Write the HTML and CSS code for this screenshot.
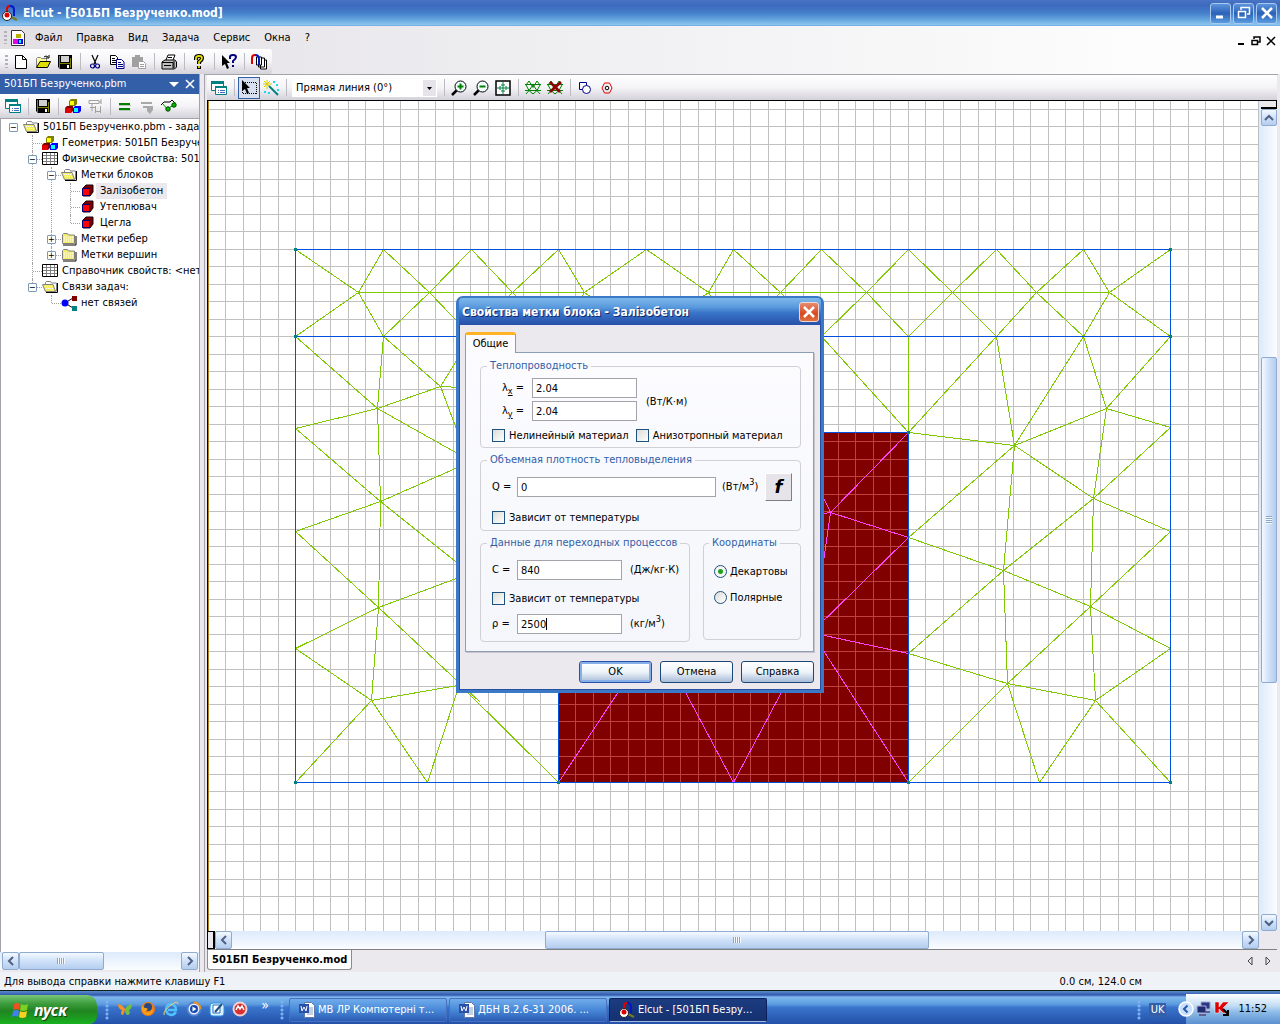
FILE: index.html
```html
<!DOCTYPE html>
<html lang="ru">
<head>
  <meta charset="utf-8">
  <title>Elcut - [501БП Безрученко.mod]</title>
  <meta name="viewport" content="width=device-width, initial-scale=1">
  <link rel="stylesheet" href="styles.css">
</head>
<body>
  <!-- shared icons -->
  <svg class="sprite" aria-hidden="true">
    <symbol id="i-elcut" viewBox="0 0 16 16">
      <path d="M5 8V4q0-3 3-3" fill="none" stroke="#e00000" stroke-width="2"/>
      <path d="M8 1q4 0 4 4v6" fill="none" stroke="#0018c8" stroke-width="2"/>
      <path d="M9 12l6 3" stroke="#7a7a20" stroke-width="2"/>
      <circle cx="5" cy="11" r="4.5" fill="#fff" stroke="#222"/>
      <circle cx="5" cy="10" r="2.5" fill="#e00000"/>
    </symbol>
    <symbol id="i-cubes" viewBox="0 0 16 16">
      <path d="M4 3l2-2h6v5l-2 2H4z" fill="#808000"/><path d="M5 3h4v4H5z" fill="#ff0"/>
      <path d="M0 10l2-2h6v5l-2 2H0z" fill="#800000"/><path d="M0 10h6v5H0z" fill="#e00000"/>
      <path d="M8 10l2-2h6v5l-2 2H8z" fill="#0000ff"/><path d="M9 10h4v4H9z" fill="#0ff"/>
    </symbol>
    <symbol id="i-props" viewBox="0 0 16 16">
      <path d="M.5 1.500h12v9H.5z" fill="#fff" stroke="#008080"/><path d="M0 1h13v3H0z" fill="#008080"/>
      <path d="M4.500 6.500h11v8h-11z" fill="#fff" stroke="#008080"/><path d="M4 6h12v2H4z" fill="#008080"/>
      <path d="M7 10.500h1M9 10.500h5M7 12.500h1M9 12.500h5" stroke="#4a68b8"/>
    </symbol>
    <symbol id="i-save" viewBox="0 0 16 16">
      <path d="M1 1h14v14H3l-2-2z" fill="#000"/><path d="M2 2h1v12H2zM13 4h1v10h-1zM3 9h10v1H3z" fill="#808000"/>
      <path d="M4 2h8v6H4z" fill="#d0d0d0"/><path d="M10 11h2v3h-2z" fill="#fff"/>
    </symbol>
    <symbol id="i-open" viewBox="0 0 16 16">
      <path d="M1.500 13V4.500l1-1h3l1 1h5V7" fill="#ffff9c" stroke="#808080"/>
      <path d="M1.500 13.500L5 7.500h10.500l-3 6z" fill="#e0dc00" stroke="#000"/>
      <path d="M9 3q2-2 4 0m1-2v3h-3" fill="none" stroke="#000"/>
    </symbol>
    <symbol id="i-folder" viewBox="0 0 16 16">
      <path d="M1.500 12.500v-9l1-1h4l1 1.500h6v8.500z" fill="#f4ef60" stroke="#808080"/><path d="M2 14h13V5" fill="none" stroke="#000"/>
      <path d="M3 6h9M3 8h9M3 10h9" stroke="#fff" stroke-dasharray="1 1"/>
    </symbol>
    <symbol id="i-folder-open" viewBox="0 0 16 16">
      <path d="M3.500 12V3.500l1-1h4l1 1.500h5V12z" fill="#fff" stroke="#808080"/>
      <path d="M.5 5.500h10.500l2.500 7H3.500z" fill="#f4ef60" stroke="#808080"/><path d="M4 13.500h11.500V4" fill="none" stroke="#000"/>
      <path d="M3 7.500h8M4 9.500h8" stroke="#fff" stroke-dasharray="1 1"/>
    </symbol>
    <symbol id="i-table" viewBox="0 0 16 16">
      <path d="M.5 1.500h15v12H.5z" fill="#fff" stroke="#000"/>
      <path d="M1 4.500h14M1 7.500h14M1 10.500h14M4.500 2v11M8.500 2v11M12.500 2v11" stroke="#808080"/>
    </symbol>
    <symbol id="i-cube" viewBox="0 0 16 16">
      <path d="M3 5l3-3h7v7l-3 4H3z" fill="#700000" stroke="#200000"/><path d="M2.500 5.500h7v7h-7z" fill="#f00" stroke="#000080"/>
    </symbol>
    <symbol id="i-word" viewBox="0 0 16 16">
      <path d="M5.500.5h7l3 3v12h-10z" fill="#fff" stroke="#6078a8"/><path d="M8 6h6M8 8h6M8 10h6M8 12h6" stroke="#88a0c8"/>
      <path d="M0 2h10v9H0z" fill="#2850a8"/><path d="M2 4l1 5 2-4 2 4 1-5" fill="none" stroke="#fff"/>
    </symbol>
    <symbol id="i-left" viewBox="0 0 16 16"><path d="M10 4L6 8l4 4" fill="none" stroke="#4d6185" stroke-width="2"/></symbol>
    <symbol id="i-right" viewBox="0 0 16 16"><path d="M6 4l4 4-4 4" fill="none" stroke="#4d6185" stroke-width="2"/></symbol>
    <symbol id="i-up" viewBox="0 0 16 16"><path d="M4 10l4-4 4 4" fill="none" stroke="#4d6185" stroke-width="2"/></symbol>
    <symbol id="i-down" viewBox="0 0 16 16"><path d="M4 6l4 4 4-4" fill="none" stroke="#4d6185" stroke-width="2"/></symbol>
    <symbol id="i-mesh" viewBox="0 0 16 16">
      <path d="M0 4.500h16M0 10.500h16" stroke="#008000"/>
      <path d="M4 1l4 6.500L12 1M4 1L1 5l3 5.500L8 5l4 5.500L15 5l-3-4M1 14l3-3.500L8 14l4-3.500 3 3.500" fill="none" stroke="#008000"/>
    </symbol>
  </svg>

  <header class="titlebar">
    <svg class="icon"><use href="#i-elcut"/></svg>
    <h1>Elcut - [501БП Безрученко.mod]</h1>
    <button class="win-btn" aria-label="Свернуть"><svg viewBox="0 0 16 16"><path d="M3 12h7" stroke="#fff" stroke-width="3"/></svg></button>
    <button class="win-btn" aria-label="Восстановить"><svg viewBox="0 0 16 16"><path d="M5 5V2.500h8.500V9H11M5 2.500h9" fill="none" stroke="#fff" stroke-width="1.500"/><path d="M2.500 6.500h7v6h-7zM2 6.500h8" fill="none" stroke="#fff" stroke-width="1.500"/></svg></button>
    <button class="win-btn" aria-label="Закрыть"><svg viewBox="0 0 16 16"><path d="M3 3l10 10M13 3L3 13" stroke="#fff" stroke-width="2.500"/></svg></button>
  </header>

  <nav class="menubar">
    <span class="grip"></span>
    <svg class="icon" viewBox="0 0 16 16"><path d="M1.500.5h10l3 3v12h-13z" fill="#fff" stroke="#333"/><path d="M6 4h5v4H6z" fill="#b8b000"/><path d="M3 9h5v5H3z" fill="#e000e0"/><path d="M8 9h5v5H8z" fill="#0000d0"/><path d="M9 10h2v3H9z" fill="#0ff"/></svg>
    <a href="#">Файл</a><a href="#">Правка</a><a href="#">Вид</a><a href="#">Задача</a><a href="#">Сервис</a><a href="#">Окна</a><a href="#">?</a>
    <div class="mdi">
      <button aria-label="Свернуть окно"><svg viewBox="0 0 10 10"><path d="M2 8h6" stroke="#000" stroke-width="2"/></svg></button>
      <button aria-label="Восстановить окно"><svg viewBox="0 0 10 10"><path d="M3 3V1h6v5H7M1 4.500h5.500v4H1z" fill="none" stroke="#000" stroke-width="1.500"/></svg></button>
      <button aria-label="Закрыть окно"><svg viewBox="0 0 10 10"><path d="M1 1l8 8M9 1L1 9" stroke="#000" stroke-width="1.500"/></svg></button>
    </div>
  </nav>

  <div class="toolbar-row">
    <div class="toolbar main-tools">
      <span class="grip"></span>
      <button aria-label="Создать"><svg viewBox="0 0 16 16"><path d="M2.500 1.500h7l4 4v9h-11zM9.500 1.500v4h4" fill="#fff" stroke="#000"/></svg></button>
      <button aria-label="Открыть"><svg><use href="#i-open"/></svg></button>
      <button aria-label="Сохранить"><svg><use href="#i-save"/></svg></button>
      <i class="sep"></i>
      <button aria-label="Вырезать"><svg viewBox="0 0 16 16"><path d="M5 1l4 9M11 1L7 10" fill="none" stroke="#000" stroke-width="1.200"/><circle cx="5.500" cy="12" r="2" fill="none" stroke="#000080" stroke-width="1.200"/><circle cx="10.500" cy="12" r="2" fill="none" stroke="#000080" stroke-width="1.200"/></svg></button>
      <button aria-label="Копировать"><svg viewBox="0 0 16 16"><path d="M1.500 1.500h5l2 2v7h-7z" fill="#fff" stroke="#000"/><path d="M3 4.500h3M3 6.500h4M3 8.500h4" stroke="#000"/><path d="M7.500 5.500h5l2.500 2.500v6.500H7.500z" fill="#fff" stroke="#000080"/><path d="M9 8.500h3M9 10.500h5M9 12.500h5" stroke="#000080"/></svg></button>
      <button aria-label="Вставить"><svg viewBox="0 0 16 16"><path d="M1 3h3V1h5v2h3v10H1z" fill="#a0a0a0"/><path d="M7.500 7.500h5l2 2v5h-7z" fill="#fff" stroke="#a0a0a0"/><path d="M9 10.500h4M9 12.500h4" stroke="#a0a0a0"/></svg></button>
      <i class="sep"></i>
      <button aria-label="Печать"><svg viewBox="0 0 16 16"><path d="M5 6l2-5h7l-2 5" fill="#fff" stroke="#000"/><path d="M1 8l3-2h10l1.500 2v5l-2 2H1z" fill="#c0c0c0" stroke="#000"/><path d="M1 8.500h11v6M3 11.500h7M13 7v7M7 3.500h4" fill="none" stroke="#000"/></svg></button>
      <i class="sep"></i>
      <button aria-label="Справка"><svg viewBox="0 0 16 16"><path d="M5 6V4q0-2 3-2t3 2q0 2-3 4v2M8 12v3" fill="none" stroke="#000" stroke-width="4"/><path d="M5 6V4q0-2 3-2t3 2q0 2-3 4v2M8 12v2" fill="none" stroke="#e8e000" stroke-width="1.800"/></svg></button>
      <i class="sep"></i>
      <button aria-label="Что это такое?"><svg viewBox="0 0 16 16"><path d="M1 1v11l3-2 2 5 2-1-2-5h3z" fill="#000"/><path d="M9 5V3q0-2 3-2t3 2q0 2-3 4v2M12 11v2" fill="none" stroke="#000080" stroke-width="2"/></svg></button>
      <i class="sep"></i>
      <button aria-label="Окна"><svg viewBox="0 0 16 16"><path d="M9.500 6v9h6V6h-2M7.500 4v9h6V4h-4" fill="#fff" stroke="#000"/><path d="M5.500 3v8h5V3z" fill="#fff" stroke="#000"/><path d="M1 10V4q0-3 3-3" fill="none" stroke="#e00000" stroke-width="2"/><path d="M4 1q4 0 4 4v6" fill="none" stroke="#0018c8" stroke-width="2"/></svg></button>
    </div>
  </div>

  <main class="workspace">
    <aside class="side">
      <div class="side-title">
        <h2>501БП Безрученко.pbm</h2>
        <button aria-label="Меню панели"><svg viewBox="0 0 10 10"><path d="M0 3h10L5 8z" fill="#fff"/></svg></button>
        <button aria-label="Закрыть панель"><svg viewBox="0 0 10 10"><path d="M1 1l8 8M9 1L1 9" stroke="#fff" stroke-width="1.600"/></svg></button>
      </div>
      <div class="toolbar side-tools">
        <button aria-label="Свойства"><svg><use href="#i-props"/></svg></button>
        <i class="sep"></i>
        <button aria-label="Сохранить задачу"><svg><use href="#i-save"/></svg></button>
        <i class="sep"></i>
        <button aria-label="Геометрия"><svg><use href="#i-cubes"/></svg></button>
        <button aria-label="Связи"><svg viewBox="0 0 16 16"><path d="M2 2.500h10v3H2zM14 1v5M12 4h2M5 6v7M3 9.500h5M8.500 8v7M8 13.500h6M13.500 8v7" fill="none" stroke="#a0a0a0"/></svg></button>
        <i class="sep"></i>
        <button aria-label="Решить"><svg viewBox="0 0 16 16"><path d="M2 6h11M2 11h11" stroke="#008000" stroke-width="2"/><path d="M2 7.500h12M2 12.500h12" stroke="#b8c8b8"/></svg></button>
        <button aria-label="Остановить"><svg viewBox="0 0 16 16"><path d="M2 4h11v2H2zM4 8h10v4l-3 4-3-3V10H4z" fill="#a8a8a8"/></svg></button>
        <button aria-label="Анализ"><svg viewBox="0 0 16 16"><path d="M0 7l3-3h6l2-2 3 3" fill="none" stroke="#000"/><path d="M2 6l5 6 2-3 3-1 2-4" fill="none" stroke="#00a000"/><circle cx="7" cy="11" r="2.200" fill="#00c000" stroke="#004000"/><circle cx="13" cy="7" r="2.200" fill="#00c000" stroke="#004000"/></svg></button>
      </div>
      <ul class="tree">
        <li>
          <div class="node"><button class="exp">−</button><svg><use href="#i-folder-open"/></svg><span>501БП Безрученко.pbm - задача</span></div>
          <ul>
            <li><div class="node leaf"><i></i><svg><use href="#i-cubes"/></svg><span>Геометрия: 501БП Безрученко</span></div></li>
            <li>
              <div class="node"><button class="exp">−</button><svg><use href="#i-table"/></svg><span>Физические свойства: 501БП</span></div>
              <ul>
                <li>
                  <div class="node"><button class="exp">−</button><svg><use href="#i-folder-open"/></svg><span>Метки блоков</span></div>
                  <ul>
                    <li><div class="node leaf"><i></i><svg><use href="#i-cube"/></svg><span class="selected">Залізобетон</span></div></li>
                    <li><div class="node leaf"><i></i><svg><use href="#i-cube"/></svg><span>Утеплювач</span></div></li>
                    <li><div class="node leaf"><i></i><svg><use href="#i-cube"/></svg><span>Цегла</span></div></li>
                  </ul>
                </li>
                <li><div class="node"><button class="exp">+</button><svg><use href="#i-folder"/></svg><span>Метки ребер</span></div></li>
                <li><div class="node"><button class="exp">+</button><svg><use href="#i-folder"/></svg><span>Метки вершин</span></div></li>
              </ul>
            </li>
            <li><div class="node leaf"><i></i><svg><use href="#i-table"/></svg><span>Справочник свойств: &lt;нет&gt;</span></div></li>
            <li>
              <div class="node"><button class="exp">−</button><svg><use href="#i-folder-open"/></svg><span>Связи задач:</span></div>
              <ul>
                <li><div class="node leaf"><i></i><svg viewBox="0 0 16 16"><path d="M4 8l8-5M4 8l8 5" stroke="#000"/><circle cx="4" cy="8" r="3.500" fill="#00f"/><path d="M11 1h5v5h-5z" fill="#800000"/><path d="M11 11h5v5h-5z" fill="#008080"/></svg><span>нет связей</span></div></li>
              </ul>
            </li>
          </ul>
        </li>
      </ul>
      <div class="scroll side-scroll">
        <button aria-label="Влево"><svg><use href="#i-left"/></svg></button>
        <div class="track"><div class="thumb"></div></div>
        <button aria-label="Вправо"><svg><use href="#i-right"/></svg></button>
      </div>
    </aside>

    <section class="editor">
      <div class="toolbar edit-tools">
        <button aria-label="Свойства"><svg><use href="#i-props"/></svg></button>
        <i class="sep"></i>
        <button class="pressed" aria-label="Выделение"><svg viewBox="0 0 16 16"><path d="M1.500 2.500h14v11h-14z" fill="none" stroke="#000" stroke-dasharray="1 1" shape-rendering="crispEdges"/><path d="M1 0v11l3-2 2 5 2-1-2-5h3z" fill="#000"/></svg></button>
        <button aria-label="Вставка"><svg viewBox="0 0 16 16"><path d="M4 0v9M0 4h9M1 1l6 6M7 1L1 7" stroke="#d8d000"/><path d="M6 6l9 9" stroke="#008080" stroke-width="2"/><path d="M10 1h2v2h-2zM13 4h2v2h-2zM1 11h2v2H1zM5 12h2v2H5zM14 9h2v2h-2z" fill="#20d8e8"/></svg></button>
        <i class="sep"></i>
        <div class="combo">
          <select aria-label="Тип линии"><option>Прямая линия (0°)</option></select>
          <svg viewBox="0 0 13 16"><path d="M0 0h13v16H0z" fill="#e6e4ea"/><path d="M4 7h5L6.500 10z" fill="#000"/></svg>
        </div>
        <i class="sep"></i>
        <button aria-label="Увеличить"><svg viewBox="0 0 16 16"><path d="M1 15l5-5" stroke="#000" stroke-width="2.500"/><circle cx="9.500" cy="6.500" r="5.500" fill="#f4ffff" stroke="#000"/><path d="M6.500 6.500h6M9.500 3.500v6" stroke="#008000" stroke-width="2"/></svg></button>
        <button aria-label="Уменьшить"><svg viewBox="0 0 16 16"><path d="M1 15l5-5" stroke="#000" stroke-width="2.500"/><circle cx="9.500" cy="6.500" r="5.500" fill="#f4ffff" stroke="#000"/><path d="M6.500 6.500h6" stroke="#008000" stroke-width="2"/></svg></button>
        <button aria-label="Показать всё"><svg viewBox="0 0 16 16"><path d="M1 1h14v14H1z" fill="#fff" stroke="#000" stroke-width="1.500"/><path d="M2 8h12M8 2v12M5 6v4M11 6v4M6 5h4M6 11h4" stroke="#008040"/></svg></button>
        <i class="sep"></i>
        <button aria-label="Построить сетку"><svg><use href="#i-mesh"/></svg></button>
        <button aria-label="Удалить сетку"><svg viewBox="0 0 16 16"><use href="#i-mesh"/><path d="M3 2l10 10M14 2L3 12" stroke="#900000" stroke-width="2.500"/></svg></button>
        <i class="sep"></i>
        <button aria-label="Фигуры"><svg viewBox="0 0 16 16"><path d="M2.500 2.500h7v7h-7z" fill="none" stroke="#000090"/><circle cx="9.500" cy="9.500" r="4" fill="#fff" stroke="#000090"/></svg></button>
        <button aria-label="Отверстие"><svg viewBox="0 0 16 16"><path d="M5.500 3h5L13 8l-2.500 5h-5L3 8z" fill="none" stroke="#e00000"/><circle cx="8" cy="8" r="1.800" fill="none" stroke="#000"/></svg></button>
      </div>

      <div class="canvas-area">
        <!-- drawing is in window coordinates, the group moves it under the canvas origin -->
        <svg class="canvas" shape-rendering="crispEdges">
          <defs>
            <pattern id="grid" width="35" height="35" patternUnits="userSpaceOnUse">
              <path d="M15.500 0v35M33.500 0v35M0 4.500h35M0 21.500h35" stroke="#c0c0c0"/>
            </pattern>
            <pattern id="grid-block" width="35" height="35" patternUnits="userSpaceOnUse">
              <path d="M15.500 0v35M33.500 0v35M0 4.500h35M0 21.500h35" stroke="#c04040"/>
            </pattern>
          </defs>
          <g transform="translate(-209 -101)">
            <rect x="200" y="95" width="3000" height="3000" fill="url(#grid)"/>
            <rect x="558" y="432" width="350" height="350" fill="#800000"/>
            <rect x="558" y="432" width="350" height="350" fill="url(#grid-block)"/>
            <g transform="translate(.5 .5)" fill="none">
              <path stroke="#80c800" d="M358 292H584M708 292H1109
                M295 249L358 292 383 249 429 292 471 249 512 292 558 249 584 292 646 249 708 292 733 249 780 292 821 249 866 292 908 249 952 292 996 249 1036 292 1083 249 1109 292 1170 249
                M295 336L358 292 383 336 429 292 471 336 512 292 558 336 584 292 646 336 708 292 733 336 780 292 821 336 866 292 908 336 952 292 996 336 1036 292 1083 336 1109 292 1170 336
                M295 336L377 408 295 428 380 501 295 531 378 607 295 648 371 700 295 782
                M383 336L377 408 380 501 378 607 371 700 427 782 470 650
                M383 336L440 386 377 408M440 386L471 336M440 386L480 388M440 386L470 466
                M377 408L480 466M480 457L380 501 480 581M480 569L378 607 480 702M480 681L371 700M456 681L558 782
                M821 336L908 432V336M996 336L908 432 1014 445 996 336M1083 336L1014 445 1106 408 1083 336M1170 336L1106 408 1170 427
                M1106 408L1093 498 1014 445 908 537 1003 570 1014 445M1170 427L1093 498 1170 531M1093 498L1003 570 908 653 1007 683 1003 570 1090 606 1093 498
                M1170 531L1090 606 1170 648 1095 700 1090 606 1007 683 1095 700M1007 683L908 782M1007 683L1039 782 1095 700 1170 782"/>
              <path stroke="#ff40ff" d="M908 432L830 512 908 537 810 633M830 512L810 470M830 512L820 582M830 512L800 516M908 653L810 632M908 782L810 630M558 782L630 673M733 782L675 673M733 782L791 673"/>
              <path stroke="#0050e0" d="M295 249H1170V782H295zM295 336H1170M558 782V432H908V782"/>
            </g>
            <path fill="#008080" d="M294 248h3v3h-3zM1169 248h3v3h-3zM294 335h3v3h-3zM1169 335h3v3h-3zM907 431h3v3h-3zM294 781h3v3h-3zM557 781h3v3h-3zM907 781h3v3h-3zM1169 781h3v3h-3z"/>
          </g>
        </svg>
        <div class="scroll vertical">
          <span class="split"></span>
          <button aria-label="Вверх"><svg><use href="#i-up"/></svg></button>
          <div class="track"><div class="thumb"></div></div>
          <button aria-label="Вниз"><svg><use href="#i-down"/></svg></button>
        </div>
      </div>
      <div class="scroll bottom">
        <span class="split"></span>
        <button aria-label="Влево"><svg><use href="#i-left"/></svg></button>
        <div class="track"><div class="thumb"></div></div>
        <button aria-label="Вправо"><svg><use href="#i-right"/></svg></button>
      </div>
      <div class="doc-tabs">
        <button class="doc-tab">501БП Безрученко.mod</button>
        <button class="tab-arrow" aria-label="Предыдущая вкладка"><svg viewBox="0 0 10 10"><path d="M7 1v8L3 5z" fill="none" stroke="#444"/></svg></button>
        <button class="tab-arrow" aria-label="Следующая вкладка"><svg viewBox="0 0 10 10"><path d="M3 1v8l4-4z" fill="none" stroke="#444"/></svg></button>
      </div>
    </section>
  </main>

  <footer class="statusbar">
    <span>Для вывода справки нажмите клавишу F1</span>
    <span class="coords">0.0 см, 124.0 см</span>
  </footer>

  <div class="taskbar">
    <button class="start">
      <svg viewBox="0 0 20 20"><path d="M3 4q3-2 6 0l-1 6q-3-2-6 0z" fill="#f05020"/><path d="M10 4q3 2 7 0l-1 6q-4 2-7 0z" fill="#80d020"/><path d="M2 11q3-2 6 0l-1 6q-3-2-6 0z" fill="#4080f0"/><path d="M9 11q3 2 7 0l-1 6q-4 2-7 0z" fill="#f8d020"/></svg>
      пуск
    </button>
    <span class="dots"></span>
    <div class="quick">
      <button aria-label="Бабочка"><svg viewBox="0 0 16 16"><path d="M1 3q5 1 7 5-1 6-3 6-2-1 0-5Q1 8 1 3z" fill="#f89020"/><path d="M15 3q-5 1-7 5 0 6 3 6 3-1 1-5 3-1 3-6z" fill="#70c040"/></svg></button>
      <button aria-label="Firefox"><svg viewBox="0 0 16 16"><circle cx="8" cy="8" r="7" fill="#f07810"/><circle cx="8" cy="6" r="4" fill="#284880"/><path d="M2 3q0 4 4 4l2 1-3 3q4 2 8-3 0 6-6 6Q0 12 2 3z" fill="#f8a018"/></svg></button>
      <button aria-label="Internet Explorer"><svg viewBox="0 0 16 16"><path d="M13 11q-2 3-5 3-5-1-5-6 1-5 5-5 5 1 5 6H5" fill="none" stroke="#50c0ff" stroke-width="2.500"/><path d="M1 14Q0 10 8 4q7-5 7-1" fill="none" stroke="#f0d060"/></svg></button>
      <button aria-label="Проигрыватель"><svg viewBox="0 0 16 16"><circle cx="8" cy="8" r="6.500" fill="#e8f0ff" stroke="#5080d0" stroke-width="2"/><path d="M8 1.500A6.500 6.500 0 0 1 14.500 8" fill="none" stroke="#f09020" stroke-width="2"/><circle cx="8" cy="8" r="4" fill="#1848b0"/><path d="M6.500 5.500v5l4-2.500z" fill="#fff"/></svg></button>
      <button aria-label="Рабочий стол"><svg viewBox="0 0 16 16"><rect x="1" y="2" width="14" height="13" rx="3" fill="#d8f0ff" stroke="#3090e0"/><path d="M4 4h7v8H4z" fill="#fff" stroke="#2070c0"/><path d="M6 11l7-8" stroke="#205080" stroke-width="2"/></svg></button>
      <button aria-label="Nero"><svg viewBox="0 0 16 16"><circle cx="8" cy="8" r="6.500" fill="#d83030" stroke="#f0d0d0" stroke-width="2"/><path d="M4 9l2-4 2 3 2-3 2 4" fill="none" stroke="#fff" stroke-width="1.500"/></svg></button>
      <button class="more" aria-label="Ещё">»</button>
    </div>
    <span class="dots"></span>
    <button class="task"><svg><use href="#i-word"/></svg><span>МВ ЛР Компютерні т...</span></button>
    <button class="task"><svg><use href="#i-word"/></svg><span>ДБН В.2.6-31 2006. ...</span></button>
    <button class="task active"><svg><use href="#i-elcut"/></svg><span>Elcut - [501БП Безру...</span></button>
    <span class="dots lang-dots"></span>
    <span class="lang">UK</span>
    <div class="tray">
      <button aria-label="Скрытые значки"><svg viewBox="0 0 16 16"><circle cx="8" cy="8" r="7" fill="#c8e0ff" stroke="#fff" stroke-width="1.500"/><path d="M9.500 4.500L6 8l3.500 3.500" fill="none" stroke="#2858a8" stroke-width="2"/></svg></button>
      <svg viewBox="0 0 16 16"><path d="M5 1h9v7H5z" fill="#283888" stroke="#a8a8d0"/><path d="M1 5h9v7H1z" fill="#202c70" stroke="#b0b0d8"/><path d="M3 14h7M9 11h5" stroke="#606090" stroke-width="2"/></svg>
      <svg viewBox="0 0 16 16"><path d="M1 1h4v5l4-5h6L9 7l4 5H9L5 8v4H1z" fill="#e00000" stroke="#fff" stroke-width=".5"/><path d="M9 8l5 5m0-4v5H9" fill="none" stroke="#000" stroke-width="2"/></svg>
      <time>11:52</time>
    </div>
  </div>

  <form class="dialog" role="dialog" aria-labelledby="dlg-title">
    <div class="dialog-title">
      <h2 id="dlg-title">Свойства метки блока - Залізобетон</h2>
      <button type="button" class="close" aria-label="Закрыть"><svg viewBox="0 0 16 16"><path d="M3 3l10 10M13 3L3 13" stroke="#fff" stroke-width="2.500"/></svg></button>
    </div>
    <div class="dialog-body">
      <button type="button" class="tab">Общие</button>
      <div class="panel">
        <fieldset class="conductivity">
          <legend>Теплопроводность</legend>
          <div class="lambda">
            <label for="lx">λ<sub>x</sub> =</label><input type="text" id="lx" value="2.04">
            <span class="unit">(Вт/К·м)</span>
            <label for="ly">λ<sub>y</sub> =</label><input type="text" id="ly" value="2.04">
          </div>
          <div class="checks">
            <label class="check"><input type="checkbox">Нелинейный материал</label>
            <label class="check"><input type="checkbox">Анизотропный материал</label>
          </div>
        </fieldset>
        <fieldset class="heat">
          <legend>Объемная плотность тепловыделения</legend>
          <div class="field">
            <label for="q">Q =</label><input type="text" id="q" value="0"><span>(Вт/м<sup>3</sup>)</span>
            <button type="button" class="func">f</button>
          </div>
          <label class="check"><input type="checkbox">Зависит от температуры</label>
        </fieldset>
        <div class="pair">
          <fieldset class="transient">
            <legend>Данные для переходных процессов</legend>
            <div class="field"><label for="c">C =</label><input type="text" id="c" value="840"><span>(Дж/кг·К)</span></div>
            <label class="check"><input type="checkbox">Зависит от температуры</label>
            <div class="field"><label for="rho">ρ =</label><div class="editing"><input type="text" id="rho" value="2500"></div><span>(кг/м<sup>3</sup>)</span></div>
          </fieldset>
          <fieldset class="coord-type">
            <legend>Координаты</legend>
            <label class="check"><input type="radio" name="coord" checked>Декартовы</label>
            <label class="check"><input type="radio" name="coord">Полярные</label>
          </fieldset>
        </div>
      </div>
      <div class="buttons">
        <button type="submit" class="push default">OK</button>
        <button type="button" class="push">Отмена</button>
        <button type="button" class="push">Справка</button>
      </div>
    </div>
  </form>
</body>
</html>
```
FILE: styles.css
```css
* {
  box-sizing: border-box;
}

body {
  display: flex;
  flex-direction: column;
  height: 100vh;
  margin: 0;
  overflow: hidden;
  background: #ebe9ed;
  color: #000;
  font: 11px/14px "DejaVu Sans Condensed", "Noto Sans", sans-serif;
}

button, input, select {
  font: inherit;
  color: inherit;
}

button {
  display: flex;
  align-items: center;
  justify-content: center;
  padding: 0;
  border: 0;
  background: none;
}

h1, h2 {
  margin: 0;
  font-size: 11px;
  font-weight: normal;
}

svg {
  flex: none;
  width: 16px;
  height: 16px;
}

.sprite {
  display: none;
}

/* title bar */
.titlebar {
  display: flex;
  align-items: center;
  gap: 2px;
  height: 26px;
  padding: 0 3px 0 2px;
  background: linear-gradient(#4a74c4 0, #3d69bd 20%, #447fcb 50%, #64a4dd 75%, #8cc4ee 95%, #6aa5dd 100%);
}

.titlebar h1 {
  flex: 1;
  padding-left: 3px;
  color: #fff;
  font-size: 12px;
  font-weight: bold;
}

.win-btn {
  width: 21px;
  height: 21px;
  border: 1px solid #a8c8f0;
  border-radius: 3px;
  background: linear-gradient(#5c94dc, #2c62b8 50%, #5a9ce0);
}

/* menu and toolbars */
.menubar {
  display: flex;
  align-items: center;
  height: 23px;
  padding: 0 4px;
  background: linear-gradient(90deg, #e2e0e5, #fdfdfd 90%);
}

.menubar .icon {
  margin: 0 2px 0 1px;
}

.menubar a {
  padding: 0 7px;
  color: #000;
  text-decoration: none;
}

.mdi {
  display: flex;
  gap: 5px;
  margin: 6px 0 0 auto;
}

.mdi svg,
.side-title svg,
.tab-arrow svg {
  width: 10px;
  height: 10px;
}

.grip {
  width: 3px;
  height: 13px;
  margin-right: 2px;
  background: repeating-linear-gradient(#b4b2b8 0 2px, transparent 2px 4px);
}

.toolbar-row {
  display: flex;
  height: 25px;
  background: linear-gradient(90deg, #e2e0e5, #fdfdfd 90%);
}

.toolbar {
  display: flex;
  align-items: center;
  background: linear-gradient(#fff, #f4f3f6 50%, #d4d2da);
}

.toolbar button {
  width: 22px;
  height: 22px;
}

.toolbar .sep {
  width: 1px;
  height: 17px;
  margin: 0 3px 0 4px;
  background: #bdbbc2;
}

.main-tools {
  padding: 0 2px 0 5px;
  border-radius: 0 3px 3px 0;
}

.workspace {
  display: flex;
  flex: 1;
  gap: 4px;
  min-height: 0;
  padding-right: 2px;
}

/* problem tree */
.side {
  display: flex;
  flex: none;
  flex-direction: column;
  width: 200px;
  padding-bottom: 2px;
  border-right: 1px solid #a5a3aa;
}

.side-title {
  display: flex;
  align-items: center;
  gap: 6px;
  height: 20px;
  padding: 0 4px;
  background: #335ea8;
  color: #fff;
}

.side-title h2 {
  flex: 1;
}

.side-tools {
  height: 24px;
  padding-left: 2px;
}

.tree {
  flex: 1;
  min-height: 0;
  margin: 0;
  padding: 0 0 0 3px;
  border-top: 1px solid #a5a3aa;
  border-left: 1px solid #a5a3aa;
  background: #fff;
  list-style: none;
  overflow: hidden;
}

.tree ul {
  margin: 0;
  padding-left: 19px;
  list-style: none;
}

.tree li {
  position: relative;
}

.tree ul li::before {
  content: "";
  position: absolute;
  top: 0;
  bottom: 0;
  left: 9px;
  border-left: 1px dotted #a0a0a0;
}

.tree ul li:last-child::before {
  bottom: auto;
  height: 8px;
}

.node {
  position: relative;
  display: flex;
  align-items: center;
  height: 16px;
  white-space: nowrap;
}

.node i,
.exp {
  flex: none;
  width: 9px;
  height: 9px;
  margin: 0 5px;
}

.node svg {
  z-index: 1;
}

.tree ul .node::before {
  content: "";
  position: absolute;
  left: 10px;
  width: 9px;
  border-top: 1px dotted #a0a0a0;
}

.exp {
  position: relative;
  border: 1px solid #7b9ab8;
  border-radius: 1px;
  background: #fff;
  font-size: 9px;
  line-height: 7px;
}

.node span {
  padding: 0 4px;
  line-height: 16px;
}

.node .selected {
  background: #ebe9ed;
}

/* scroll bars */
.scroll {
  display: flex;
  flex: none;
  height: 18px;
  background: linear-gradient(#dceafc, #fbfdff);
}

.scroll button,
.thumb {
  flex: none;
  width: 17px;
  border: 1px solid #8fabd0;
  border-radius: 2px;
  background: linear-gradient(#f4f9ff, #cfe1f8 50%, #b4cdee);
}

.scroll .track {
  display: flex;
  flex: 1;
}

.track::before,
.track::after {
  content: "";
  flex: 1;
}

.thumb {
  display: flex;
  flex: 1.22;
  align-items: center;
  justify-content: center;
}

.thumb::before {
  content: "";
  width: 8px;
  height: 6px;
  background: repeating-linear-gradient(90deg, #8ca6c8 0 1px, #f4f9ff 1px 2px);
}

.side-scroll {
  padding: 0 1px 0 2px;
}

.side-scroll .thumb {
  flex: 1.07;
}

.side-scroll .track::before {
  display: none;
}

.vertical {
  flex-direction: column;
  width: 18px;
  height: auto;
  padding-left: 2px;
  background: linear-gradient(90deg, #dceafc, #fbfdff);
}

.vertical .track {
  flex-direction: column;
}

.vertical button,
.vertical .thumb {
  width: 16px;
}

.vertical button {
  height: 17px;
}

.vertical .thumb {
  flex: 1.4;
  background: linear-gradient(90deg, #f4f9ff, #cfe1f8 50%, #b4cdee);
}

.vertical .thumb::before {
  width: 6px;
  height: 8px;
  background: repeating-linear-gradient(#8ca6c8 0 1px, #f4f9ff 1px 2px);
}

.split {
  flex: none;
  width: 8px;
  border: 1px solid #000;
  border-right-width: 2px;
  background: #ebe9ed;
}

.vertical .split {
  width: 16px;
  height: 8px;
  border-width: 0 1px 2px 0;
}

.bottom {
  background: linear-gradient(#dceafc, #fbfdff);
}

/* leaves the corner under the vertical bar free */
.bottom::after {
  content: "";
  width: 18px;
  background: #ebe9ed;
}

/* model editor */
.editor {
  display: flex;
  flex: 1;
  flex-direction: column;
  min-width: 0;
  padding: 0 1px 0 2px;
  border-top: 1px solid #a5a3aa;
  border-left: 1px solid #a5a3aa;
}

.edit-tools {
  height: 25px;
  padding-left: 1px;
}

.toolbar .pressed {
  border: 1px solid #335ea8;
  background: #d8dfee;
}

.combo {
  position: relative;
  width: 145px;
  margin: 0 3px 0 2px;
}

.combo select {
  width: 100%;
  height: 18px;
  padding: 0 16px 0 4px;
  border: 0;
  background: #fff;
  appearance: none;
}

.combo svg {
  position: absolute;
  top: 1px;
  right: 1px;
  width: 13px;
  pointer-events: none;
}

.canvas-area {
  display: flex;
  flex: 1;
  min-height: 0;
  border-top: 1px solid #000;
  border-left: 1px solid #000;
}

.canvas {
  flex: 1;
  width: auto;
  min-width: 0;
  height: 100%;
  border-left: 1px solid #b08020;
  background: #fff;
}

.doc-tabs {
  display: flex;
  align-items: center;
  height: 23px;
  border-top: 1px solid #808080;
}

.doc-tab {
  align-self: flex-start;
  height: 20px;
  margin-right: auto;
  padding: 0 4px;
  border: 1px solid #8a8a90;
  border-top: 0;
  border-radius: 0 0 3px 3px;
  background: #fff;
  font-weight: bold;
}

.tab-arrow {
  width: 18px;
}

.statusbar {
  display: flex;
  align-items: center;
  height: 18px;
  padding: 2px 138px 0 4px;
  background: #eff3f8;
}

.coords {
  margin-left: auto;
}

/* task bar */
.taskbar {
  display: flex;
  align-items: center;
  gap: 2px;
  height: 34px;
  border-top: 1px solid #102018;
  background: linear-gradient(#5c8cc8 0, #3058b0 4px, #80b8ec 6px, #5c9ce0 40%, #3a74cc 50%, #2858b0 90%, #2450a8);
  color: #fff;
}

.start {
  align-self: flex-end;
  justify-content: flex-start;
  gap: 3px;
  width: 97px;
  height: 29px;
  padding-left: 11px;
  border-radius: 0 10px 8px 0;
  background: linear-gradient(#78c878, #3c9c3c 30%, #208420 55%, #18b020 100%);
  font: italic bold 16px/20px "Noto Sans", sans-serif;
  text-shadow: 1px 1px 1px #104010;
}

.start svg {
  width: 20px;
  height: 20px;
}

.dots {
  width: 4px;
  height: 20px;
  margin: 4px 6px 0;
  background: radial-gradient(circle, #7cb0f0 1px, transparent 2px) 0 0 / 4px 4px;
}

.quick {
  display: flex;
  gap: 7px;
  padding-top: 2px;
}

.quick + .dots {
  margin: 4px 3px 0;
}

.quick .more {
  width: 20px;
  padding-bottom: 8px;
  font-size: 14px;
}

.task {
  justify-content: flex-start;
  gap: 3px;
  width: 158px;
  height: 24px;
  margin-top: 4px;
  padding-left: 9px;
  border: 1px solid #4870c0;
  border-radius: 2px;
  background: linear-gradient(#70acec, #4888d8 50%, #2c5cb4);
}

.task.active {
  border-color: #0c2060 #0c2060 #a0b8e0;
  background: linear-gradient(#1c3c80, #143070);
}

.lang-dots {
  margin-left: auto;
}

.lang {
  margin-top: 4px;
  padding: 0 2px;
  background: #335ea8;
}

.tray {
  display: flex;
  align-items: center;
  align-self: flex-end;
  gap: 2px;
  height: 30px;
  margin-left: 18px;
  padding-right: 13px;
  background: linear-gradient(#fff, #c0dcf4 40%, #8cbce8 60%, #5c90d0);
  color: #000;
}

.tray button {
  margin-left: -8px;
}

.tray time {
  padding-left: 6px;
}

/* block label properties */
.dialog {
  position: absolute;
  top: 296px;
  left: 456px;
  width: 368px;
  border: 3px solid #3a78c8;
  border-top-width: 2px;
  border-radius: 7px 7px 0 0;
  background: #ebe9ed;
  box-shadow: inset 0 0 0 1px #2850a0;
}

.dialog-title {
  display: flex;
  align-items: center;
  height: 27px;
  padding: 0 2px 0 3px;
  border-radius: 4px 4px 0 0;
  background: linear-gradient(#80b8ec, #5898dc 35%, #3874c8 55%, #2850a8);
  color: #fff;
}

.dialog-title h2 {
  flex: 1;
  font-size: 12px;
  font-weight: bold;
  text-shadow: 1px 1px #102870;
}

.close {
  width: 20px;
  height: 20px;
  border: 1px solid #f0d8d0;
  border-radius: 3px;
  background: linear-gradient(#e88c70, #d84820 60%, #e07040);
}

.dialog-body {
  padding: 7px 7px 7px 6px;
}

.tab {
  position: relative;
  z-index: 1;
  width: 51px;
  height: 21px;
  margin-bottom: -1px;
  border: 1px solid #919b9c;
  border-top: 3px solid #ffb428;
  border-bottom: 0;
  border-radius: 3px 3px 0 0;
  background: #fcfcfe;
}

.panel {
  display: flex;
  flex-direction: column;
  gap: 5px;
  padding: 6px 12px 9px 14px;
  border: 1px solid #8c9fb6;
  background: linear-gradient(#fcfcff, #f4f6fb);
  box-shadow: 1px 1px #c8c6cc;
}

fieldset {
  min-width: 0;
  margin: 0;
  padding: 0 10px;
  border: 1px solid #d0d0d6;
  border-radius: 4px;
}

legend {
  margin-left: -5px;
  padding: 0 3px;
  color: #335ea8;
}

fieldset input[type="text"] {
  width: 105px;
  height: 20px;
  padding: 0 3px;
  border: 1px solid #a5a3aa;
  outline: 0;
  background: #fff;
}

sub, sup {
  font-size: 9px;
  line-height: 0;
}

sub {
  text-decoration: underline;
}

.conductivity {
  padding: 5px 10px 5px 11px;
}

.lambda {
  display: grid;
  grid-template-columns: 30px 105px auto;
  gap: 3px 0;
  align-items: center;
  padding-left: 10px;
}

.lambda .unit {
  grid-row: 1 / 3;
  grid-column: 3;
  padding: 4px 0 0 9px;
}

.checks {
  display: flex;
  gap: 7px;
  margin-top: 8px;
}

.check {
  display: flex;
  align-items: center;
  gap: 4px;
  height: 13px;
  white-space: nowrap;
}

.check input {
  flex: none;
  width: 13px;
  height: 13px;
  margin: 0;
  border: 1px solid #1c5180;
  background: linear-gradient(135deg, #dcdcd7, #fff);
  appearance: none;
}

.check input[type="radio"] {
  border-radius: 50%;
}

.check input[type="radio"]:checked {
  background: radial-gradient(circle, #21a121 2px, #f4f4f2 3px);
}

.field {
  display: flex;
  align-items: center;
}

.field label {
  width: 25px;
}

.field span {
  margin-left: 8px;
}

/* caret behind the typed value */
.editing {
  position: relative;
  display: flex;
}

.editing::after {
  content: "";
  position: absolute;
  top: 4px;
  left: 29px;
  width: 1px;
  height: 12px;
  background: #000;
}

.heat {
  padding: 6px 8px 6px 11px;
}

.heat input[type="text"] {
  width: 199px;
}

.heat .field span {
  margin-left: 6px;
}

.heat .check {
  margin-top: 10px;
}

.func {
  width: 27px;
  height: 28px;
  margin-left: auto;
  border: 1px solid;
  border-color: #fff #808080 #808080 #fff;
  background: #e6e4e8;
  font: italic bold 18px/20px "DejaVu Sans", sans-serif;
}

.pair {
  display: flex;
  gap: 13px;
  align-items: flex-start;
}

.transient {
  flex: 1;
  padding: 10px 4px 7px 11px;
}

.transient .check {
  margin: 12px 0 9px;
}

.coord-type {
  width: 98px;
  height: 104px;
  padding: 15px 4px 0 10px;
}

.coord-type .check {
  gap: 3px;
}

.coord-type .check + .check {
  margin-top: 13px;
}

.buttons {
  display: flex;
  gap: 8px;
  justify-content: flex-end;
  margin-top: 9px;
}

.push {
  width: 73px;
  height: 22px;
  border: 1px solid #1c4878;
  border-radius: 3px;
  background: linear-gradient(#fff, #eef4fa 50%, #a8bcd8);
}

.push.default {
  border-color: #2850a8;
  box-shadow: inset 0 0 0 2px #86aee8;
}
```
